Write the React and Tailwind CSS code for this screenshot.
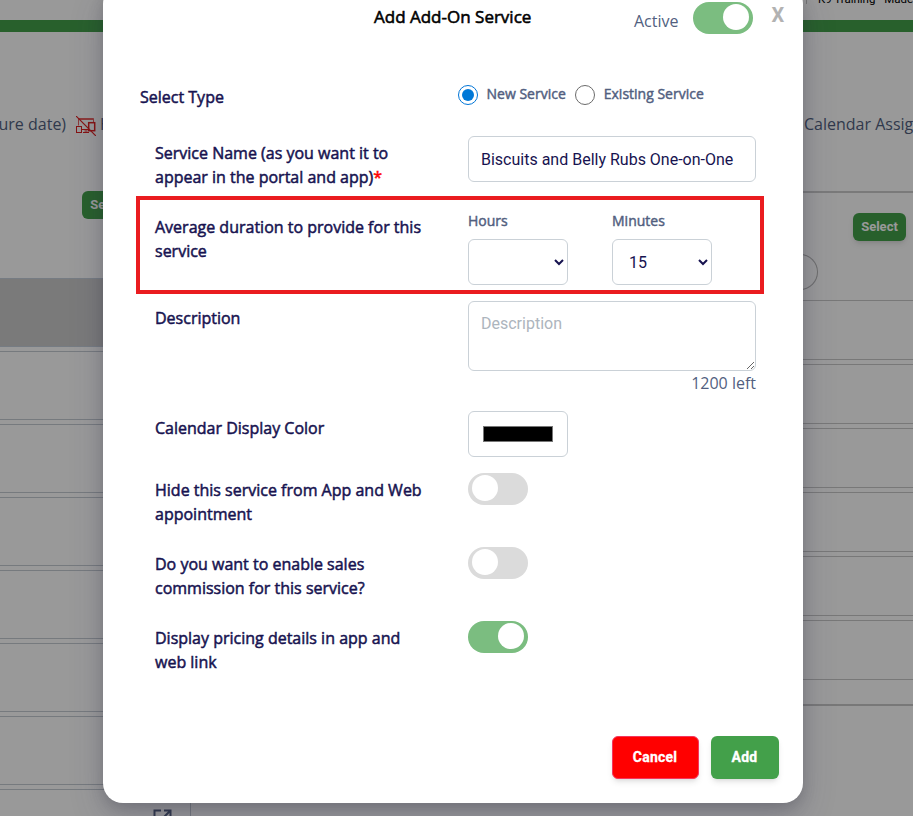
import React, { useState } from 'react';

const leftRows = [1, 2, 3, 4, 5, 6];
const rightRows = [1, 2, 3, 4, 5, 6];

function Toggle({ checked, onChange }) {
  return (
    <button
      type="button"
      role="switch"
      aria-checked={checked}
      onClick={() => onChange(!checked)}
      className={`flex h-8 w-[60px] shrink-0 rounded-full px-1 pt-0.5 ${
        checked ? 'justify-end bg-[#7bbd80]' : 'justify-start bg-[#dbdbdb]'
      }`}
    >
      <span className="h-[26px] w-[26px] rounded-full bg-white" />
    </button>
  );
}

function Label({ children }) {
  return (
    <label className="w-[313px] shrink-0 pt-[5px] pr-10 text-base leading-6 text-[#171350] [-webkit-text-stroke:0.5px]">
      {children}
    </label>
  );
}

function Radio({ checked, onClick, children }) {
  return (
    <button type="button" onClick={onClick} className="flex items-center">
      <span
        className={`flex h-5 w-5 items-center justify-center rounded-full border ${
          checked ? 'border-[#0075d7]' : 'border-[#6b6b6b]'
        }`}
      >
        {checked && <span className="h-3 w-3 rounded-full bg-[#0078d7]" />}
      </span>
      <span className="ml-2 pb-0.5 pl-[0.5px] text-sm leading-5 whitespace-nowrap text-[#525f7f] [-webkit-text-stroke:0.45px]">
        {children}
      </span>
    </button>
  );
}

function NoDevicesIcon() {
  return (
    <svg width="20" height="20" viewBox="0 0 20 20" fill="none" stroke="#e02020" strokeWidth="1">
      <path d="M2.5 9.5V2.5h15V6M3 3.5h14" strokeOpacity="0.7" />
      <path d="M6 13.5h6M7 16.5h6M8.5 15h3" />
      <rect x="0.5" y="10.5" width="5" height="6" />
      <rect x="12.7" y="6.7" width="6" height="8" strokeWidth="1.5" />
      <path d="M0 0l20 20" strokeWidth="1.2" />
    </svg>
  );
}

function ServicesPage() {
  return (
    <div className="h-full bg-white text-base text-[#525f7f]">
      <div className="flex h-5 justify-end overflow-hidden">
        <div className="flex w-[107px]">
          <span className="h-1 border-l border-[#c4c4c4]" />
          <span className="-mt-[13px] ml-[11px] font-[Roboto] text-[11.5px] leading-6 whitespace-nowrap text-black">
            K9 Training - Made
          </span>
        </div>
      </div>
      <div className="h-3 bg-[#43a04a]" />

      <div className="flex justify-between">
        <div className="w-[400px]">
          <div className="flex h-[159px] items-start pt-20">
            <span className="w-[76px] leading-6 whitespace-nowrap">
              <span className="-ml-[1.5px]">ure date)</span>
            </span>
            <span className="mt-1">
              <NoDevicesIcon />
            </span>
            <span className="ml-1 leading-6">Hide</span>
          </div>
          <div className="flex h-[87px] pl-[82px]">
            <button className="h-7 w-[53px] rounded-md bg-[#43a04a] font-[Roboto] text-[13px] font-bold text-white">
              Select
            </button>
          </div>
          <div className="h-[69px] border-y border-[#c5cfdb] bg-[#cbcbcb]" />
          {leftRows.map((n) => (
            <div key={n} className="mt-1 h-[69px] border-y border-[#c5cbd3]" />
          ))}
          <div className="mt-1 flex h-[69px] border-t border-[#c5cbd3]">
            <div className="w-[191px] border-r border-[#c5cbd3] pt-[17px] pl-[152px]">
              <svg width="22" height="22" viewBox="0 0 22 22" fill="none" stroke="#525f7f" strokeWidth="2">
                <path d="M9 3.5H2.5V20H19v-6.5M12 3.5h6.5V10M18.5 3.5L9 13" />
              </svg>
            </div>
          </div>
        </div>

        <div className="w-[113px]">
          <div className="h-[159px] pt-20 pl-1 leading-6 whitespace-nowrap">Calendar Assignment</div>
          <div className="flex h-[62px] justify-end border-t-2 border-[#cccccc] pt-5 pr-[7px]">
            <button className="h-7 w-[53px] rounded-md bg-[#43a04a] font-[Roboto] text-[13px] font-bold text-white shadow-md">
              Select
            </button>
          </div>
          <div className="h-[47px] pt-px">
            <div className="h-9 w-[18px] rounded-r-full border border-l-0 border-[#b5b5b5]" />
          </div>
          {rightRows.map((n) => (
            <div key={n} className="mb-1 h-[60px] border-y border-[#c8c8c8]" />
          ))}
          <div className="mt-6 border-t-2 border-[#c8c8c8]" />
        </div>
      </div>
    </div>
  );
}

export default function App() {
  const [active, setActive] = useState(true);
  const [type, setType] = useState('new');
  const [name, setName] = useState('Biscuits and Belly Rubs One-on-One');
  const [description, setDescription] = useState('');
  const [color, setColor] = useState('#000000');
  const [hidden, setHidden] = useState(false);
  const [commission, setCommission] = useState(false);
  const [pricing, setPricing] = useState(true);

  const field = 'rounded-md border border-[#cad1d7] bg-white font-[Roboto] text-base text-[#171350] outline-none';

  return (
    <div className="relative h-screen w-full overflow-hidden font-['Open_Sans',sans-serif]">
      <ServicesPage />

      {/* Backdrop */}
      <div className="absolute inset-0 flex items-start justify-center bg-black/40 pr-[7px]">
        <div className="relative -mt-4 h-[819px] w-[700px] rounded-[20px] bg-white pt-4 shadow-[0_15px_35px_rgba(50,50,93,0.2),0_5px_15px_rgba(0,0,0,0.17)]">
          <div className="flex h-[85px] items-start pl-[271px]">
            <h2 className="w-[260px] pt-[5px] text-[17px] leading-6 whitespace-nowrap text-black [-webkit-text-stroke:0.55px]">
              Add Add-On Service
            </h2>
            <span className="w-[59px] pt-[9px] leading-6 text-[#525f7f]">Active</span>
            <div className="pt-0.5">
              <Toggle checked={active} onChange={setActive} />
            </div>
            <button className="ml-[18.5px] pt-[3px] font-[Roboto] text-[20px] leading-6 font-bold text-[#b2b2b2]">X</button>
          </div>

          <div className="flex h-[51px] items-start pl-[37px]">
            <span className="w-[318px] text-base leading-6 text-[#171350] [-webkit-text-stroke:0.5px]">Select Type</span>
            <div className="flex h-5 gap-[9.5px]">
              <Radio checked={type === 'new'} onClick={() => setType('new')}>
                New Service
              </Radio>
              <Radio checked={type === 'existing'} onClick={() => setType('existing')}>
                Existing Service
              </Radio>
            </div>
          </div>

          <div className="pl-[52px]">
            <div className="flex h-[74px] items-start">
              <Label>
                Service Name (as you want it to appear in the portal and app)
                <span className="text-[#ff0000]">*</span>
              </Label>
              <input
                value={name}
                onChange={(e) => setName(e.target.value)}
                className={`${field} h-[46px] w-[288px] px-3`}
              />
            </div>

            <div className="flex h-[91px] items-start">
              <Label>Average duration to provide for this service</Label>
              <div className="flex gap-11 text-sm text-[#525f7f]">
                <div>
                  <div className="h-[29px] pt-px leading-5 [-webkit-text-stroke:0.45px]">Hours</div>
                  <select className={`${field} h-[46px] w-[100px] pl-3`}>
                    <option></option>
                    <option>1</option>
                  </select>
                </div>
                <div>
                  <div className="h-[29px] pt-px leading-5 [-webkit-text-stroke:0.45px]">Minutes</div>
                  <select defaultValue="15" className={`${field} h-[46px] w-[100px] pl-3`}>
                    <option>15</option>
                    <option>30</option>
                  </select>
                </div>
              </div>
            </div>

            <div className="flex h-[110px] items-start">
              <Label>Description</Label>
              <div className="flex flex-col items-end">
                <textarea
                  placeholder="Description"
                  maxLength={1200}
                  value={description}
                  onChange={(e) => setDescription(e.target.value)}
                  className={`${field} h-[70px] w-[288px] px-3 py-2.5 leading-6 placeholder:text-[#adb5bd]`}
                />
                <span className="leading-6 text-[#525f7f]">{1200 - description.length} left</span>
              </div>
            </div>

            <div className="flex h-[62px] items-start">
              <Label>Calendar Display Color</Label>
              <input
                type="color"
                value={color}
                onChange={(e) => setColor(e.target.value)}
                className={`${field} h-[46px] w-[100px] px-3 py-2.5`}
              />
            </div>

            <div className="flex h-[74px] items-start">
              <Label>Hide this service from App and Web appointment</Label>
              <Toggle checked={hidden} onChange={setHidden} />
            </div>
            <div className="flex h-[74px] items-start">
              <Label>Do you want to enable sales commission for this service?</Label>
              <Toggle checked={commission} onChange={setCommission} />
            </div>
            <div className="flex h-[115px] items-start">
              <Label>Display pricing details in app and web link</Label>
              <Toggle checked={pricing} onChange={setPricing} />
            </div>
          </div>

          <div className="flex justify-end gap-3 pr-6 font-[Roboto] text-sm font-bold tracking-[0.2px] text-white [-webkit-text-stroke:0.3px]">
            <button className="h-[43px] w-[87px] rounded-md border border-[#f5365c] bg-[#ff0000] pr-px pb-0.5 shadow-md">
              Cancel
            </button>
            <button className="h-[43px] w-[68px] rounded-md bg-[#43a04a] pr-px pb-0.5 shadow-md">Add</button>
          </div>

          {/* Highlight around the duration row */}
          <div className="pointer-events-none absolute top-[212px] left-[33px] h-[98px] w-[628px] border-4 border-[#ea1c1f]" />
        </div>
      </div>
    </div>
  );
}
